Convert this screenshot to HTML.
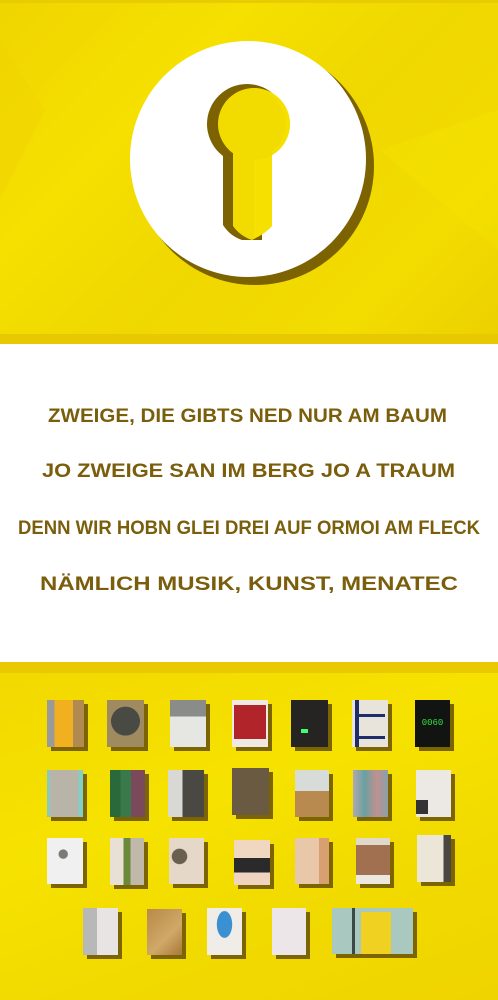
<!DOCTYPE html>
<html><head><meta charset="utf-8">
<style>
html,body{margin:0;padding:0;}
body{width:498px;height:1000px;position:relative;overflow:hidden;background:#fff;font-family:"Liberation Sans",sans-serif;}
.top{position:absolute;left:0;top:0;width:498px;height:344px;background:linear-gradient(135deg,#f0d500 0%,#f5e000 30%,#efd700 55%,#f3dc00 80%,#ecd000 100%);}
.top .band{position:absolute;left:0;top:334px;width:498px;height:10px;background:#e8c800;}
.top .band0{position:absolute;left:0;top:0;width:498px;height:3px;background:#e9cc00;}
.bot{position:absolute;left:0;top:662px;width:498px;height:338px;background:linear-gradient(160deg,#f2d800 0%,#f6e200 40%,#f1da00 70%,#f0d400 100%);}
.bot .band{position:absolute;left:0;top:0;width:498px;height:11px;background:#e9c900;}
.t{position:absolute;box-shadow:4px 4px 0 #7c6400;overflow:hidden;}
</style></head><body>
<div class="top"><div class="band0"></div><div class="band"></div>
<svg width="498" height="344" style="position:absolute;left:0;top:0">
<polygon points="0,40 45,110 0,200" fill="#efd300" opacity=".4"/>
<polygon points="380,150 498,110 498,250" fill="#f6e400" opacity=".4"/>
<circle cx="255" cy="166" r="119" fill="#7c6200"/>
<circle cx="248" cy="159" r="118" fill="#fff"/>
<circle cx="247" cy="124" r="40" fill="#7c6200"/>
<path d="M223,140 L223,225 Q230,236 242,240 L262,240 L262,140 Z" fill="#7c6200"/>
<circle cx="254" cy="124" r="36" fill="#f2dc00"/>
<path d="M233,148 L233,226 Q240,236 252,240 Q265,234 272,226 L272,148 Z" fill="#f2dc00"/>
<path d="M254,88 A36,36 0 0 1 254,160 L254,238 Q264,234 272,226 L272,152 A36,36 0 0 0 254,88 Z" fill="#f6e300" opacity=".6"/>
</svg>
</div>

<svg width="498" height="300" style="position:absolute;left:0;top:380px" font-family="Liberation Sans, sans-serif" font-weight="bold" font-size="19" fill="#7a5e0c">
<text x="48" y="42" textLength="399" lengthAdjust="spacingAndGlyphs">ZWEIGE, DIE GIBTS NED NUR AM BAUM</text>
<text x="42" y="97" textLength="413" lengthAdjust="spacingAndGlyphs">JO ZWEIGE SAN IM BERG JO A TRAUM</text>
<text x="18" y="154" textLength="462" lengthAdjust="spacingAndGlyphs">DENN WIR HOBN GLEI DREI AUF ORMOI AM FLECK</text>
<text x="40" y="210" textLength="418" lengthAdjust="spacingAndGlyphs">NÄMLICH MUSIK, KUNST, MENATEC</text>
</svg>

<div class="bot"><div class="band"></div></div>

<!-- row 1 -->
<div class="t" style="left:47px;top:700px;width:37px;height:47px;background:linear-gradient(90deg,#9a9a9a 0 20%,#f0b020 20% 70%,#b08a50 70%)"></div>
<div class="t" style="left:107px;top:700px;width:37px;height:47px;background:radial-gradient(circle at 50% 45%,#4a4a44 0 45%,#a08a60 46%)"></div>
<div class="t" style="left:170px;top:700px;width:36px;height:47px;background:linear-gradient(180deg,#8a8c8a 0 35%,#e6e6e2 35%)"></div>
<div class="t" style="left:232px;top:700px;width:36px;height:47px;background:#efe9e2"><div style="position:absolute;left:2px;top:5px;width:32px;height:34px;background:#b0242a"></div></div>
<div class="t" style="left:291px;top:700px;width:37px;height:47px;background:#262422"><div style="position:absolute;left:10px;top:29px;width:7px;height:4px;background:#3cff70"></div></div>
<div class="t" style="left:352px;top:700px;width:36px;height:47px;background:#e8e4dc"><div style="position:absolute;left:3px;top:0;width:4px;height:47px;background:#1e2c6a"></div><div style="position:absolute;left:3px;top:14px;width:30px;height:3px;background:#1e2c6a"></div><div style="position:absolute;left:3px;top:36px;width:30px;height:3px;background:#1e2c6a"></div></div>
<div class="t" style="left:415px;top:700px;width:35px;height:47px;background:#121412;color:#30e040;font-size:9px;line-height:47px;text-align:center;font-family:'Liberation Mono',monospace">0060</div>
<!-- row 2 -->
<div class="t" style="left:47px;top:770px;width:36px;height:47px;background:linear-gradient(90deg,#8ac8c0 0 8%,#b8b4a8 8% 88%,#80d0c8 88%)"></div>
<div class="t" style="left:110px;top:770px;width:35px;height:47px;background:linear-gradient(90deg,#2a6a3a 0 30%,#3a7a4a 30% 60%,#7a4a5a 60%)"></div>
<div class="t" style="left:168px;top:770px;width:36px;height:47px;background:linear-gradient(90deg,#d8d8d4 0 40%,#4a4842 40%)"></div>
<div class="t" style="left:232px;top:768px;width:37px;height:47px;background:#6a5a42"></div>
<div class="t" style="left:295px;top:770px;width:34px;height:47px;background:linear-gradient(180deg,#d8dcd8 0 45%,#b88a50 45%)"></div>
<div class="t" style="left:353px;top:770px;width:35px;height:47px;background:linear-gradient(90deg,#b0a8b0,#6aa0a0,#c09090,#8aa0a8)"></div>
<div class="t" style="left:416px;top:770px;width:35px;height:47px;background:#ece8e4"><div style="position:absolute;left:0;top:30px;width:12px;height:14px;background:#333"></div></div>
<!-- row 3 -->
<div class="t" style="left:47px;top:838px;width:36px;height:46px;background:radial-gradient(circle at 45% 35%,#7a7a76 0 12%,#f0f0f0 14%)"></div>
<div class="t" style="left:110px;top:838px;width:34px;height:47px;background:linear-gradient(90deg,#e8e0d4 0 40%,#6a8a3a 40% 60%,#c0b8a8 60%)"></div>
<div class="t" style="left:169px;top:838px;width:35px;height:46px;background:radial-gradient(circle at 30% 40%,#6a6050 0 20%,#e6d8c8 22%)"></div>
<div class="t" style="left:234px;top:840px;width:36px;height:45px;background:linear-gradient(180deg,#f0d8c0 0 40%,#2a2a2a 40% 72%,#f0d4c0 72%)"></div>
<div class="t" style="left:295px;top:838px;width:34px;height:46px;background:linear-gradient(90deg,#e8c8a8 0 70%,#d8a070 70%)"></div>
<div class="t" style="left:356px;top:838px;width:34px;height:46px;background:linear-gradient(180deg,#e0d8c8 0 15%,#a07050 15% 80%,#ece8e0 80%)"></div>
<div class="t" style="left:417px;top:835px;width:34px;height:47px;background:linear-gradient(90deg,#ece6d8 0 78%,#4a4640 78%)"></div>
<!-- row 4 -->
<div class="t" style="left:83px;top:908px;width:35px;height:47px;background:linear-gradient(90deg,#b8b8b8 0 40%,#e8e4e4 40%)"></div>
<div class="t" style="left:147px;top:909px;width:35px;height:46px;background:linear-gradient(135deg,#b88a48,#d0a868 60%,#a87838)"></div>
<div class="t" style="left:207px;top:908px;width:35px;height:47px;background:radial-gradient(ellipse at 50% 35%,#3a90d0 0 30%,#f0ece8 32%)"></div>
<div class="t" style="left:272px;top:908px;width:34px;height:47px;background:#ece6e8"></div>
<div class="t" style="left:332px;top:908px;width:81px;height:46px;background:#a8c8c0"><div style="position:absolute;left:20px;top:0;width:3px;height:46px;background:#3a4a44"></div><div style="position:absolute;left:29px;top:4px;width:30px;height:42px;background:#f0d020"></div></div>
</body></html>
